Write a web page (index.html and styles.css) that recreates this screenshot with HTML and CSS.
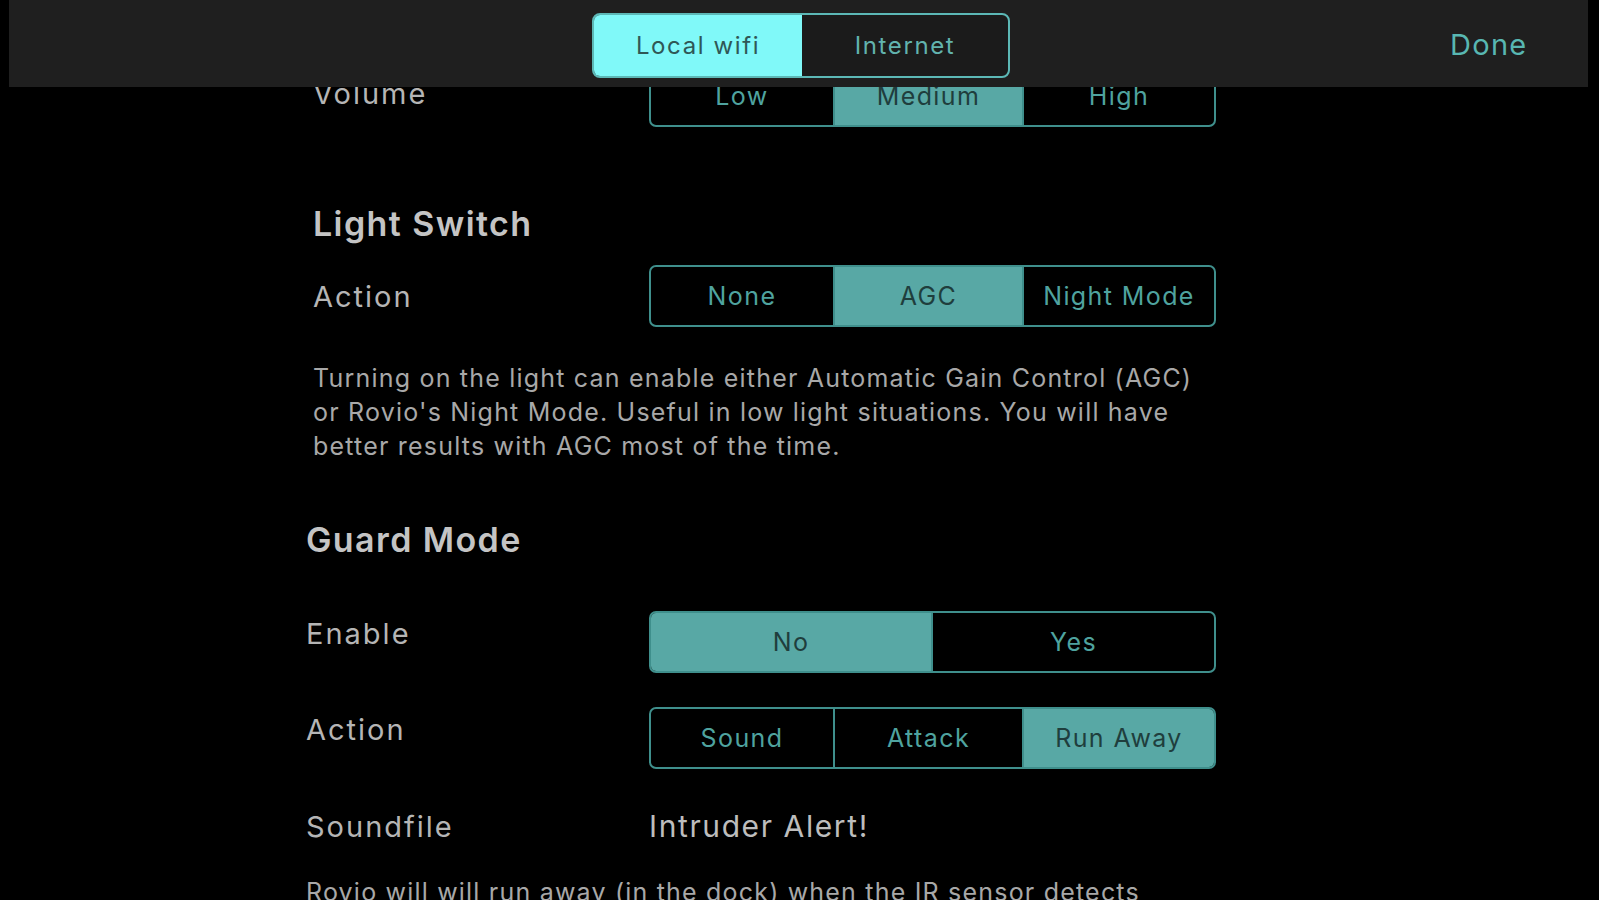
FILE: index.html
```html
<!DOCTYPE html>
<html lang="en">
<head>
    <meta charset="UTF-8">
    <title>Rovio Settings</title>
    <link rel="stylesheet" href="styles.css">
</head>
<body>
    <header class="topbar">
        <div class="conn-switch">
            <span class="conn-item active">Local wifi</span>
            <span class="conn-item">Internet</span>
        </div>
        <a class="done" href="#">Done</a>
    </header>
    <main class="settings">
        <div class="row row-volume">
            <div class="label">Volume</div>
            <div class="segmented three">
                <span class="seg">Low</span>
                <span class="seg selected">Medium</span>
                <span class="seg">High</span>
            </div>
        </div>

        <section class="group light">
            <h2>Light Switch</h2>
            <div class="row">
                <div class="label">Action</div>
                <div class="segmented three">
                    <span class="seg">None</span>
                    <span class="seg selected">AGC</span>
                    <span class="seg">Night Mode</span>
                </div>
            </div>
            <p class="note">Turning on the light can enable either Automatic Gain Control (AGC) or Rovio's Night Mode. Useful in low light situations. You will have better results with AGC most of the time.</p>
        </section>

        <section class="group guard">
            <h2>Guard Mode</h2>
            <div class="row">
                <div class="label">Enable</div>
                <div class="segmented two">
                    <span class="seg selected">No</span>
                    <span class="seg">Yes</span>
                </div>
            </div>
            <div class="row row-action">
                <div class="label">Action</div>
                <div class="segmented three">
                    <span class="seg">Sound</span>
                    <span class="seg">Attack</span>
                    <span class="seg selected">Run Away</span>
                </div>
            </div>
            <div class="row row-text">
                <div class="label">Soundfile</div>
                <div class="value">Intruder Alert!</div>
            </div>
            <p class="note">Rovio will will run away (in the dock) when the IR sensor detects</p>
        </section>
    </main>
</body>
</html>
```

FILE: styles.css
```css
body {
    margin: 0;
    padding: 0;
    background-color: #000;
    font-family: 'Inter', 'Liberation Sans', sans-serif;
    color: #b8b8b8;
    height: 900px;
    overflow: hidden;
}

.topbar {
    position: fixed;
    top: 0;
    left: 9px;
    width: 1579px;
    height: 87px;
    background-color: #1f1f1f;
    z-index: 10;
}

.conn-switch {
    position: absolute;
    left: 583px;
    top: 13px;
    width: 418px;
    height: 65px;
    box-sizing: border-box;
    display: flex;
    border: 2px solid #5cb8b6;
    border-radius: 8px;
    overflow: hidden;
    background-color: #1b1b1b;
}

.conn-item {
    flex: 1;
    display: flex;
    align-items: center;
    justify-content: center;
    font-size: 24px;
    letter-spacing: 1.6px;
    color: #62b3ae;
}

.conn-item:first-child {
    flex: 0 0 208px;
}

.conn-item.active {
    background-color: #80f9f9;
    color: #2f5756;
}

.done {
    position: absolute;
    left: 1441px;
    top: 25px;
    font-size: 29px;
    line-height: 40px;
    letter-spacing: 1.3px;
    color: #58b7b2;
    text-decoration: none;
}

.settings {
    padding: 65px 0 0 313px;
    width: 903px;
}

.row {
    display: flex;
    align-items: center;
    height: 62px;
}

.label {
    width: 336px;
    font-size: 29px;
    letter-spacing: 2px;
    color: #b5b5b5;
}

.row-volume .label {
    padding-bottom: 6px;
}

.segmented {
    flex: 1;
    height: 62px;
    box-sizing: border-box;
    display: flex;
    border: 2px solid #3f8f8c;
    border-radius: 7px;
    overflow: hidden;
}

.seg {
    display: flex;
    align-items: center;
    justify-content: center;
    font-size: 25px;
    letter-spacing: 1.4px;
    color: #4fa39f;
    border-left: 2px solid #3f8f8c;
}

.seg:first-child {
    border-left: none;
}

.three .seg:nth-child(1) { width: 182px; }
.three .seg:nth-child(2) { width: 187px; }
.three .seg:nth-child(3) { flex: 1; }

.two .seg:nth-child(1) { width: 280px; }
.two .seg:nth-child(2) { flex: 1; }

.seg.selected {
    background-color: #58a8a5;
    color: #1f3e3d;
}

.group h2 {
    margin: 0;
    font-size: 34px;
    line-height: 40px;
    font-weight: 600;
    letter-spacing: 1.4px;
    color: #c4c4c4;
}

.light h2 {
    margin-top: 77px;
    margin-bottom: 21px;
}

.note {
    margin: 34px 0 0;
    font-size: 25px;
    line-height: 34px;
    letter-spacing: 1.2px;
    color: #a8a8a8;
}

.guard {
    margin-left: -7px;
}

.guard .label {
    width: 343px;
    padding-bottom: 17px;
}

.guard h2 {
    margin-top: 57px;
    margin-bottom: 51px;
}

.row-action {
    margin-top: 34px;
}

.row-text {
    margin-top: 37px;
    height: 40px;
}

.guard .row-text .label {
    padding-bottom: 0;
}

.value {
    font-size: 30px;
    letter-spacing: 1.6px;
    color: #bdbdbd;
}

.guard .note {
    margin-top: 29px;
}
```
